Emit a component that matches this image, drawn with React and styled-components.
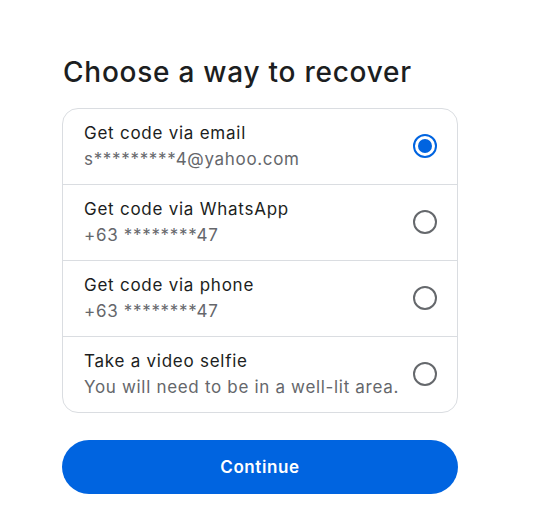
import React, { useState } from "react";
import styled, { createGlobalStyle } from "styled-components";

const Global = createGlobalStyle`
  html, body { margin: 0; padding: 0; background: #fff; }
  body { font-family: Inter, "Noto Sans", sans-serif; -webkit-font-smoothing: antialiased; }
`;

const Page = styled.div`
  width: 396px;
  padding: 56px 0 0 62px;
  display: flex;
  flex-direction: column;
`;

const Title = styled.h1`
  margin: 0 0 20px 1px;
  font-size: 28px;
  line-height: 32px;
  font-weight: 500;
  color: #1c1e21;
  letter-spacing: 0.75px;
`;

const Card = styled.div`
  border: 1px solid #dadde1;
  border-radius: 16px;
  overflow: hidden;
  display: flex;
  flex-direction: column;
`;

const Row = styled.label`
  display: flex;
  align-items: center;
  padding: 10px 20px 11px 21px;
  min-height: 54px;
  cursor: pointer;
  & + & { border-top: 1px solid #dadde1; }
`;

const Texts = styled.div`
  flex: 1;
  display: flex;
  flex-direction: column;
  gap: 2px;
`;

const RowTitle = styled.span`
  font-size: 17px;
  line-height: 24px;
  color: #1c1e21;
  font-weight: 400;
  letter-spacing: 0.75px;
`;

const RowSub = styled.span`
  font-size: 17px;
  line-height: 24px;
  color: #65676b;
  letter-spacing: 0.68px;
`;

const Radio = styled.span`
  width: 24px;
  height: 24px;
  box-sizing: border-box;
  border-radius: 50%;
  border: 2px solid ${p => (p.$on ? "#0064e0" : "#65686c")};
  display: flex;
  align-items: center;
  justify-content: center;
  flex-shrink: 0;
  &::after {
    content: "";
    width: 14px;
    height: 14px;
    border-radius: 50%;
    background: #0064e0;
    display: ${p => (p.$on ? "block" : "none")};
  }
`;

const Button = styled.button`
  margin-top: 27px;
  height: 54px;
  border: none;
  border-radius: 27px;
  background: #0064e0;
  color: #fff;
  font-family: inherit;
  font-size: 17px;
  font-weight: 600;
  letter-spacing: 0.6px;
  cursor: pointer;
`;

const options = [
  { t: "Get code via email", s: "s*********4@yahoo.com" },
  { t: "Get code via WhatsApp", s: "+63 ********47" },
  { t: "Get code via phone", s: "+63 ********47" },
  { t: "Take a video selfie", s: "You will need to be in a well-lit area." },
];

export default function App() {
  const [sel, setSel] = useState(0);
  return (
    <>
      <Global />
      <Page>
        <Title>Choose a way to recover</Title>
        <Card>
          {options.map((o, i) => (
            <Row key={i} onClick={() => setSel(i)}>
              <Texts>
                <RowTitle>{o.t}</RowTitle>
                <RowSub>{o.s}</RowSub>
              </Texts>
              <Radio $on={sel === i} />
            </Row>
          ))}
        </Card>
        <Button>Continue</Button>
      </Page>
    </>
  );
}
